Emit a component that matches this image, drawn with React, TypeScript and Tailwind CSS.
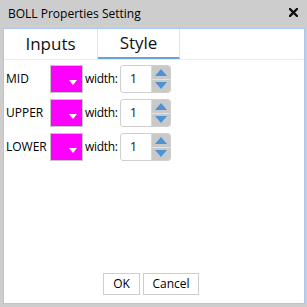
const rows = ["MID", "UPPER", "LOWER"];

function Spinner() {
    return (
        <div className="flex h-[28px] w-[51px] rounded-[3px] border border-[#cfcfcf] bg-white overflow-hidden">
            <div className="flex-1 pl-[9px] flex items-center text-[13px] text-[#222]">1</div>
            <div className="w-[19px] flex flex-col bg-[#c9c9c9] border-l border-[#d8d8d8]">
                <div className="flex-1 flex items-center justify-center border-b border-[#e2e2e2]">
                    <svg width="12" height="7" viewBox="0 0 12 7"><polygon points="6,0 12,7 0,7" fill="#4b93d6" /></svg>
                </div>
                <div className="flex-1 flex items-center justify-center">
                    <svg width="12" height="7" viewBox="0 0 12 7"><polygon points="0,0 12,0 6,7" fill="#4b93d6" /></svg>
                </div>
            </div>
        </div>
    );
}

export default function App() {
    return (
        <div
            className="w-[307px] h-[307px] bg-[#cdcdcd] pl-[3px] pr-[2px] pb-[3px] flex flex-col text-black"
            style={{ fontFamily: '"Open Sans", "Noto Sans", sans-serif' }}
        >
            <div className="h-[28px] shrink-0 flex items-center justify-between pl-[5px] pr-[7px]">
                <span className="text-[12px]">BOLL Properties Setting</span>
                <svg className="-mt-[3px]" width="9" height="9" viewBox="0 0 9 9">
                    <path d="M1 1 L8 8 M8 1 L1 8" stroke="#111" strokeWidth="2.4" strokeLinecap="square" />
                </svg>
            </div>
            <div className="flex-1 bg-white border border-[#a8c8f0] flex flex-col">
                <div className="h-[31px] flex border-b border-[#ececec]">
                    <div className="w-[94px] flex items-center justify-center text-[17px] text-[#111] border-r border-[#e4e4e4]">Inputs</div>
                    <div className="w-[82px] flex items-center justify-center text-[17px] text-[#111] border-r border-[#e4e4e4] border-b-2 border-b-[#6aa3dc]">Style</div>
                </div>
                <div className="flex flex-col gap-[6px] pt-[5px] pl-[2px]">
                    {rows.map((r) => (
                        <div key={r} className="flex items-center h-[28px]">
                            <span className="w-[44px] text-[12px]">{r}</span>
                            <div className="relative w-[33px] h-[28px] bg-[#ff00ff] border border-[#c4c4c4]">
                                <svg className="absolute left-[18px] top-[14px]" width="8" height="5" viewBox="0 0 8 5"><polygon points="0,0 8,0 4,5" fill="#fff" /></svg>
                            </div>
                            <span className="ml-[2px] mr-[2px] text-[12px] tracking-[-0.3px]">width:</span>
                            <Spinner />
                        </div>
                    ))}
                </div>
                <div className="mt-auto mb-[8px] flex justify-center gap-[3px] pr-[6px]">
                    <button className="h-[22px] w-[37px] border border-[#cfcfcf] bg-white text-[12px]">OK</button>
                    <button className="h-[22px] w-[56px] border border-[#cfcfcf] bg-white text-[12px]">Cancel</button>
                </div>
            </div>
        </div>
    );
}
